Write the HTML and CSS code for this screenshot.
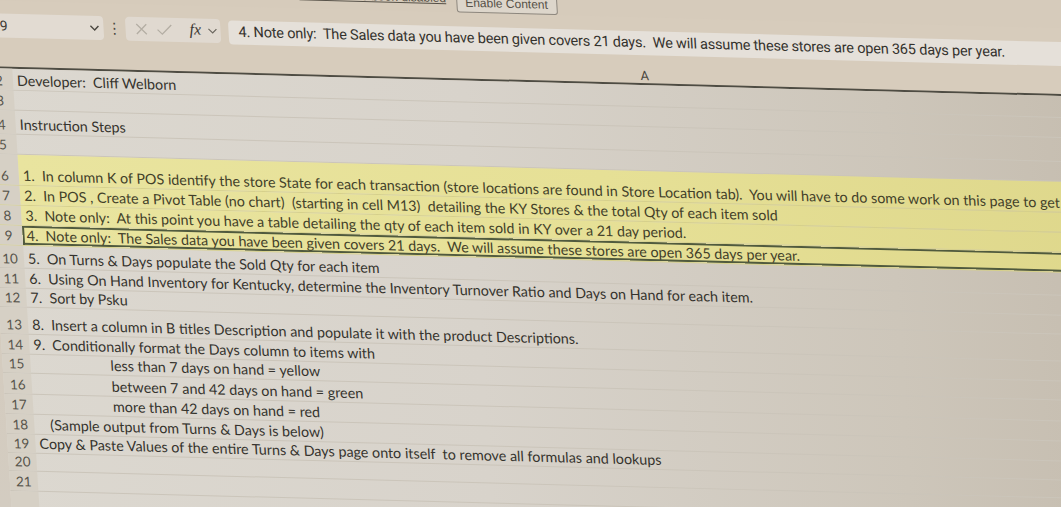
FILE: index.html
```html
<!DOCTYPE html>
<html>
<head>
<meta charset="utf-8">
<link rel="stylesheet" href="styles.css">
</head>
<body>
<div class="screen">
  <div class="msgbar">
    <span class="msg">Macros have been disabled</span>
    <span class="enable">Enable Content</span>
  </div>
  <div class="fbar">
    <div class="namebox">
      <span class="ref">A9</span>
      <svg class="chev" width="10" height="8" viewBox="0 0 10 8"><path d="M1 2 L5 6 L9 2" fill="none" stroke="#4a4740" stroke-width="1.4"/></svg>
    </div>
    <span class="dots">⋮</span>
    <div class="fbtns">
      <svg class="ico" width="12" height="12" viewBox="0 0 12 12"><path d="M1 1 L11 11 M11 1 L1 11" stroke="#b4aea4" stroke-width="1.3"/></svg>
      <svg class="ico" width="16" height="12" viewBox="0 0 16 12"><path d="M1 6 L5.5 10.5 L15 1" fill="none" stroke="#b4aea4" stroke-width="1.3"/></svg>
      <span class="fx">fx</span>
      <svg class="chev2" width="10" height="8" viewBox="0 0 10 8"><path d="M1 2 L5 6 L9 2" fill="none" stroke="#6b675f" stroke-width="1.2"/></svg>
    </div>
    <div class="formula">4. Note only:  The Sales data you have been given covers 21 days.  We will assume these stores are open 365 days per year.</div>
  </div>
  <div class="colhead">
    <div class="corner"></div>
    <div class="colA">A</div>
  </div>
  <div class="grid">
    <div class="row h22"><div class="rh">2</div><div class="cell">Developer:  Cliff Welborn</div></div>
    <div class="row h20"><div class="rh">3</div><div class="cell"></div></div>
    <div class="row h24"><div class="rh">4</div><div class="cell">Instruction Steps</div></div>
    <div class="row h20"><div class="rh">5</div><div class="cell"></div></div>
    <div class="row h31 hl"><div class="rh">6</div><div class="cell">1.  In column K of POS identify the store State for each transaction (store locations are found in Store Location tab).  You will have to do some work on this page to get the data you need.</div></div>
    <div class="row h20 hl"><div class="rh">7</div><div class="cell">2.  In POS , Create a Pivot Table (no chart)  (starting in cell M13)  detailing the KY Stores &amp; the total Qty of each item sold</div></div>
    <div class="row h20 hl"><div class="rh">8</div><div class="cell">3.  Note only:  At this point you have a table detailing the qty of each item sold in KY over a 21 day period.</div></div>
    <div class="row h20 hl sel"><div class="rh">9</div><div class="cell">4.  Note only:  The Sales data you have been given covers 21 days.  We will assume these stores are open 365 days per year.</div></div>
    <div class="row h23"><div class="rh">10</div><div class="cell">5.  On Turns &amp; Days populate the Sold Qty for each item</div></div>
    <div class="row h20"><div class="rh">11</div><div class="cell">6.  Using On Hand Inventory for Kentucky, determine the Inventory Turnover Ratio and Days on Hand for each item.</div></div>
    <div class="row h19"><div class="rh">12</div><div class="cell">7.  Sort by Psku</div></div>
    <div class="row h27"><div class="rh">13</div><div class="cell">8.  Insert a column in B titles Description and populate it with the product Descriptions.</div></div>
    <div class="row h20"><div class="rh">14</div><div class="cell">9.  Conditionally format the Days column to items with</div></div>
    <div class="row h19"><div class="rh">15</div><div class="cell ind">less than 7 days on hand = yellow</div></div>
    <div class="row h21"><div class="rh">16</div><div class="cell ind">between 7 and 42 days on hand = green</div></div>
    <div class="row h20"><div class="rh">17</div><div class="cell ind">more than 42 days on hand = red</div></div>
    <div class="row h20"><div class="rh">18</div><div class="cell ind2">(Sample output from Turns &amp; Days is below)</div></div>
    <div class="row h19"><div class="rh">19</div><div class="cell">Copy &amp; Paste Values of the entire Turns &amp; Days page onto itself  to remove all formulas and lookups</div></div>
    <div class="row h18"><div class="rh">20</div><div class="cell"></div></div>
    <div class="row h20"><div class="rh">21</div><div class="cell"></div></div>
    <div class="row h20"><div class="rh"></div><div class="cell"></div></div>
  </div>
</div>
</body>
</html>
```
FILE: styles.css
```css
html, body {
  margin: 0;
  padding: 0;
}
body {
  width: 1061px;
  height: 507px;
  overflow: hidden;
  background: linear-gradient(to bottom, #d6cbbb 0%, #d6cbbb 20%, #d3ccc1 100%);
  font-family: "Lato", "Liberation Sans", sans-serif;
}
.screen {
  width: 1200px;
  height: 560px;
  margin-left: -20px;
  transform-origin: 0 0;
  transform: matrix(1, 0.026, 0.062, 1, 0, 0);
  background: #d7ccbc;
}
.msgbar {
  height: 10px;
  display: flex;
  align-items: flex-start;
  padding-left: 320px;
  gap: 10px;
  font-family: "Liberation Sans", sans-serif;
  font-size: 12px;
  color: #555047;
}
.msg {
  margin-top: -21px;
  line-height: 14px;
  text-decoration: underline;
  white-space: nowrap;
}
.enable {
  margin-top: -21px;
  padding: 3px 8px 2px;
  line-height: 14px;
  border: 1px solid #8d877e;
  border-radius: 3px;
  background: #ddd6cb;
  white-space: nowrap;
}
.fbar {
  height: 30px;
  display: flex;
  align-items: center;
}
.namebox {
  width: 122px;
  height: 24px;
  box-sizing: border-box;
  background: #e2dbd2;
  border-radius: 0 4px 4px 0;
  display: flex;
  align-items: center;
  justify-content: space-between;
  padding: 0 4px 0 9px;
  font-family: "Roboto", sans-serif;
  font-size: 14px;
  color: #3d3a34;
}
.dots {
  width: 22px;
  text-align: center;
  font-size: 15px;
  color: #4a4740;
  font-family: "DejaVu Sans", sans-serif;
}
.fbtns {
  width: 95px;
  height: 24px;
  box-sizing: border-box;
  background: #e0d9d0;
  border-radius: 4px;
  display: flex;
  align-items: center;
  padding-left: 10px;
  gap: 9px;
}
.fx {
  font-family: "Liberation Serif", serif;
  font-style: italic;
  font-size: 16px;
  color: #3a3731;
  margin-left: 8px;
  margin-top: -2px;
}
.chev2 { margin-left: -3px; }
.formula {
  flex: 1;
  margin-left: 8px;
  height: 24px;
  margin-top: 2px;
  background: #e5e0d9;
  border-radius: 4px 0 0 4px;
  padding-left: 10px;
  font-family: "Roboto", sans-serif;
  font-size: 14.5px;
  letter-spacing: -0.2px;
  line-height: 24px;
  color: #34322d;
  white-space: pre;
  overflow: hidden;
}
.colhead {
  margin-top: 6px;
  height: 20px;
  display: flex;
  border-bottom: 2px solid #4e4c43;
}
.corner { width: 28px; flex: none; }
.colA {
  width: 1266px;
  flex: none;
  text-align: center;
  font-family: "Roboto", sans-serif;
  font-size: 13px;
  line-height: 14px;
  padding-top: 6px;
  color: #4a4740;
}
.grid {
  background: linear-gradient(to right, #dcd8d0 0%, #d8d3cb 40%, #cdc6ba 75%, #c2b9ab 100%);
}
.row {
  display: flex;
  border-bottom: 1px solid #cbc5ba;
  box-sizing: border-box;
}
.h18 { height: 18px; }
.h19 { height: 19px; }
.h20 { height: 20px; }
.h21 { height: 21px; }
.h22 { height: 22px; }
.h23 { height: 23px; }
.h24 { height: 24px; }
.h27 { height: 27px; }
.h31 { height: 31px; }
.rh {
  width: 28px;
  flex: none;
  background: #d6d0c5;
  color: #57544b;
  font-size: 13.5px;
  text-align: center;
  align-self: stretch;
  display: flex;
  align-items: flex-end;
  justify-content: center;
  padding-bottom: 1px;
  box-sizing: border-box;
}
.cell {
  flex: 1;
  display: flex;
  align-items: flex-end;
  padding: 0 0 1px 4px;
  font-size: 14.3px;
  line-height: 17px;
  color: #35332d;
  white-space: pre;
  overflow: hidden;
}
.ind { padding-left: 80px; }
.ind2 { padding-left: 16px; }
.hl .cell {
  background: linear-gradient(to right, #e9e49f 0%, #e6e096 50%, #ddd68a 100%);
  color: #424029;
}
.hl { border-bottom-color: #d6d08a; }
.sel .cell {
  box-shadow: inset 2px 2px 0 #505a3e, inset 0 -2px 0 #505a3e;
}
```
